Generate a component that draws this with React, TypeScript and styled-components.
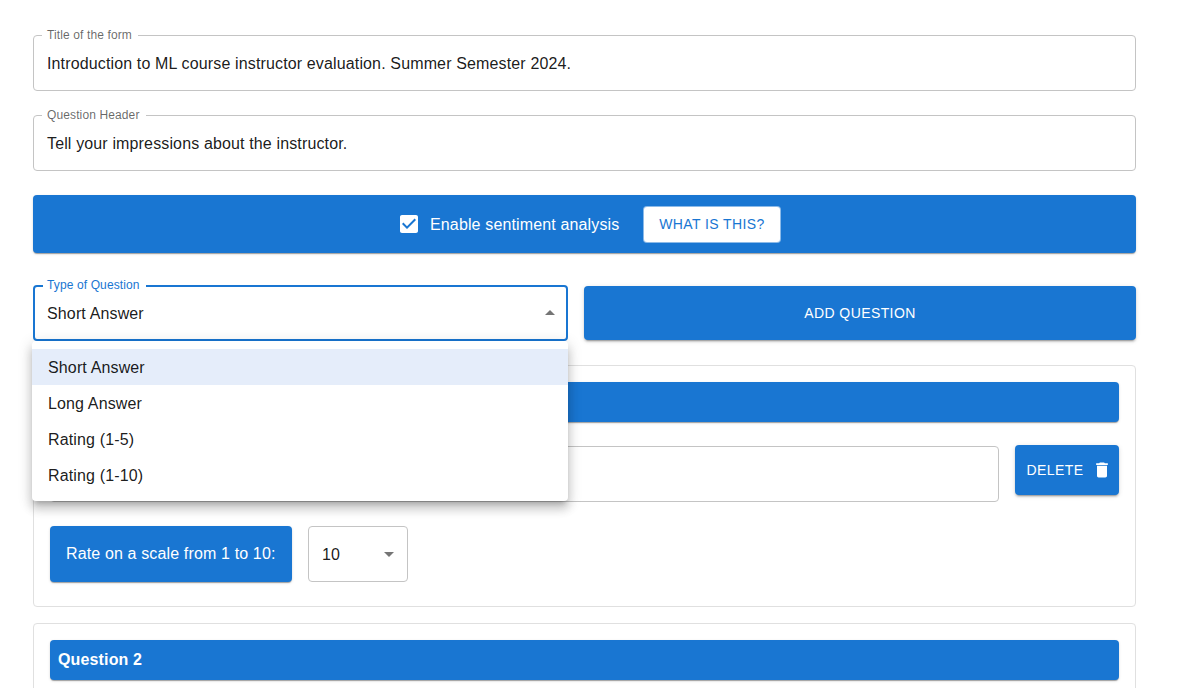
import React from 'react';
import styled, { createGlobalStyle, css } from 'styled-components';

const blue = '#1976d2';
const lowShadow =
  '0 2px 1px -1px rgba(0,0,0,.2), 0 1px 1px 0 rgba(0,0,0,.14), 0 1px 3px 0 rgba(0,0,0,.12)';
const buttonShadow =
  '0 3px 1px -2px rgba(0,0,0,.2), 0 2px 2px 0 rgba(0,0,0,.14), 0 1px 5px 0 rgba(0,0,0,.12)';
const menuShadow =
  '0 5px 5px -3px rgba(0,0,0,.2), 0 8px 10px 1px rgba(0,0,0,.14), 0 3px 14px 2px rgba(0,0,0,.12)';

const GlobalStyle = createGlobalStyle`
  * { box-sizing: border-box; }
  html, body { margin: 0; height: 100%; overflow: hidden; background: #fff; }
  body {
    font-family: "Liberation Sans", Helvetica, Arial, sans-serif;
    font-size: 16px;
    line-height: 24px;
    letter-spacing: 0.14px;
    color: rgba(0, 0, 0, 0.9);
  }
`;

const Page = styled.main`
  display: flex;
  flex-direction: column;
  width: 1177px;
  height: 688px;
  overflow: hidden;
  padding: 35px 41px 0 33px;
`;

const Field = styled.div<{ $focused?: boolean; $width?: string }>`
  position: relative;
  flex: none;
  display: flex;
  align-items: center;
  justify-content: space-between;
  width: ${(p) => p.$width ?? '100%'};
  height: 56px;
  padding: 0 ${(p) => (p.$focused ? 4 : 6)}px 0 ${(p) => (p.$focused ? 12 : 13)}px;
  border: ${(p) => (p.$focused ? `2px solid ${blue}` : '1px solid #c4c4c4')};
  border-radius: 4px;
`;

const FieldText = styled.span`
  padding-top: 2px;
  white-space: nowrap;
`;

const FieldLabel = styled.label<{ $focused?: boolean }>`
  position: absolute;
  top: ${(p) => (p.$focused ? -10 : -9)}px;
  left: ${(p) => (p.$focused ? 8 : 8)}px;
  padding: 0 6px 0 5px;
  background: #fff;
  font-size: 12px;
  line-height: 16px;
  letter-spacing: 0.12px;
  color: ${(p) => (p.$focused ? blue : 'rgba(0, 0, 0, 0.6)')};
  white-space: nowrap;
  ${(p) =>
    p.$focused &&
    css`
      padding-left: 4px;
    `}
`;

const Fields = styled.section`
  display: flex;
  flex-direction: column;
  gap: 24px;
`;

const surface = css`
  background: ${blue};
  color: #fff;
  border-radius: 4px;
  box-shadow: ${lowShadow};
`;

const SentimentBar = styled.section`
  ${surface}
  flex: none;
  display: flex;
  align-items: center;
  height: 58px;
  margin-top: 24px;
  padding-left: 364px;
`;

const CheckLabel = styled.label`
  display: flex;
  align-items: center;
  gap: 9px;
  width: 246px;
`;

const Button = styled.button<{ $light?: boolean }>`
  ${surface}
  display: flex;
  align-items: center;
  justify-content: center;
  border: 0;
  padding: 0;
  font: 400 14px/24px "Liberation Sans", Helvetica, Arial, sans-serif;
  letter-spacing: 0.4px;
  box-shadow: ${buttonShadow};
  ${(p) =>
    p.$light &&
    css`
      background: #fff;
      color: ${blue};
      border: 1px solid rgba(25, 118, 210, 0.5);
      box-shadow: none;
    `}
`;

const HelpButton = styled(Button)`
  width: 138px;
  height: 37px;
`;

const AddButton = styled(Button)`
  height: 54px;
`;

const DeleteButton = styled(Button)`
  width: 104px;
  height: 50px;
  gap: 9px;
  padding-left: 5px;
`;

const AddRow = styled.section`
  flex: none;
  display: grid;
  grid-template-columns: 535px 552px;
  gap: 16px;
  align-items: center;
  margin-top: 32px;
`;

const SelectAnchor = styled.div`
  position: relative;
`;

const Menu = styled.ul`
  position: absolute;
  z-index: 2;
  top: 56px;
  left: -1px;
  width: 536px;
  margin: 0;
  padding: 8px 0;
  list-style: none;
  background: #fff;
  border-radius: 4px;
  box-shadow: ${menuShadow};
`;

const MenuItem = styled.li<{ $selected?: boolean }>`
  height: 36px;
  padding: 7px 16px 5px;
  background: ${(p) => (p.$selected ? '#e5edfa' : 'transparent')};
`;

const Card = styled.article<{ $gap: number }>`
  flex: none;
  height: 242px;
  margin-top: ${(p) => p.$gap}px;
  padding: 16px;
  border: 1px solid #e0e0e0;
  border-radius: 4px;
`;

const CardHeader = styled.h2`
  ${surface}
  height: 40px;
  margin: 0;
  padding: 8px;
  font-size: 16px;
  font-weight: 700;
`;

const QuestionRow = styled.div`
  display: flex;
  align-items: flex-start;
  gap: 16px;
  margin-top: 23px;
`;

const QuestionField = styled(Field)`
  flex: 1;
  margin-top: 1px;
`;

const RatingRow = styled.div`
  display: flex;
  gap: 16px;
  margin-top: 24px;
`;

const RatingHint = styled.div`
  ${surface}
  width: 242px;
  height: 56px;
  padding: 16px;
  white-space: nowrap;
`;

const Arrow = ({ up = false }: { up?: boolean }) => (
  <svg width="24" height="24" viewBox="0 0 24 24" fill="rgba(0,0,0,.54)">
    <path d={up ? 'M7 14l5-5 5 5z' : 'M7 10l5 5 5-5z'} />
  </svg>
);

const CheckedBox = () => (
  <svg width="24" height="24" viewBox="0 0 24 24" fill="#fff">
    <path d="M19 3H5c-1.11 0-2 .9-2 2v14c0 1.1.89 2 2 2h14c1.11 0 2-.9 2-2V5c0-1.1-.89-2-2-2zm-9 14l-5-5 1.41-1.41L10 14.17l7.59-7.59L19 8l-9 9z" />
  </svg>
);

const TrashIcon = () => (
  <svg width="20" height="20" viewBox="0 0 24 24" fill="#fff">
    <path d="M6 19c0 1.1.9 2 2 2h8c1.1 0 2-.9 2-2V7H6v12zM19 4h-3.5l-1-1h-5l-1 1H5v2h14V4z" />
  </svg>
);

const questionTypes = ['Short Answer', 'Long Answer', 'Rating (1-5)', 'Rating (1-10)'];

export default function App() {
  return (
    <>
      <GlobalStyle />
      <Page>
        <Fields>
          <Field>
            <FieldLabel>Title of the form</FieldLabel>
            <FieldText>Introduction to ML course instructor evaluation. Summer Semester 2024.</FieldText>
          </Field>
          <Field>
            <FieldLabel>Question Header</FieldLabel>
            <FieldText>Tell your impressions about the instructor.</FieldText>
          </Field>
        </Fields>
        <SentimentBar>
          <CheckLabel>
            <CheckedBox />
            <FieldText>Enable sentiment analysis</FieldText>
          </CheckLabel>
          <HelpButton $light>WHAT IS THIS?</HelpButton>
        </SentimentBar>
        <AddRow>
          <SelectAnchor>
            <Field $focused>
              <FieldLabel $focused>Type of Question</FieldLabel>
              <FieldText>Short Answer</FieldText>
              <Arrow up />
            </Field>
            <Menu>
              {questionTypes.map((type, i) => (
                <MenuItem key={type} $selected={i === 0}>
                  {type}
                </MenuItem>
              ))}
            </Menu>
          </SelectAnchor>
          <AddButton>ADD QUESTION</AddButton>
        </AddRow>
        <Card $gap={24}>
          <CardHeader />
          <QuestionRow>
            <QuestionField />
            <DeleteButton>
              DELETE
              <TrashIcon />
            </DeleteButton>
          </QuestionRow>
          <RatingRow>
            <RatingHint>
              <FieldText>Rate on a scale from 1 to 10:</FieldText>
            </RatingHint>
            <Field $width="100px">
              <FieldText>10</FieldText>
              <Arrow />
            </Field>
          </RatingRow>
        </Card>
        <Card $gap={16}>
          <CardHeader>Question 2</CardHeader>
        </Card>
      </Page>
    </>
  );
}
